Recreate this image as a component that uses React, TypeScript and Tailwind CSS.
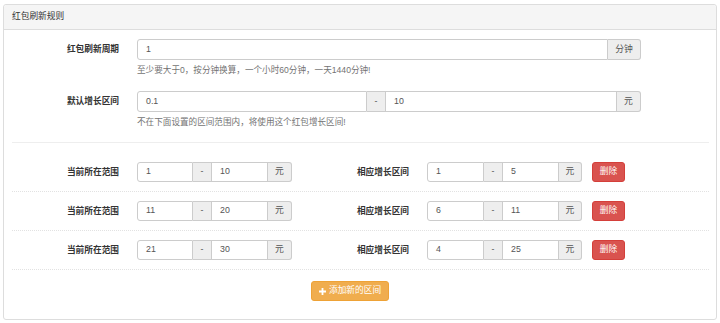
import React from "react";

const F = "font-['Liberation_Sans','Noto_Sans_CJK_SC',sans-serif]";

type Part = { t: "in" | "ad"; v: string; w: number };

function Group({ parts, h = 20 }: { parts: Part[]; h?: number }) {
  return (
    <div className="flex" style={{ height: h }}>
      {parts.map((p, i) => {
        const first = i === 0;
        const last = i === parts.length - 1;
        const base =
          p.t === "in"
            ? "bg-white text-[#555] justify-start pl-[8px]"
            : "bg-[#eeeeee] text-[#555] justify-center";
        const border = first ? "border" : "border-y border-r";
        const round = `${first ? "rounded-l-[3px]" : ""} ${last ? "rounded-r-[3px]" : ""}`;
        return (
          <div
            key={i}
            className={`flex items-center h-full border-[#cccccc] text-[8.8px] ${base} ${border} ${round}`}
            style={{ width: p.w }}
          >
            {p.v}
          </div>
        );
      })}
    </div>
  );
}

function Label({ text, h = 20 }: { text: string; h?: number }) {
  return (
    <div
      className="w-[107px] shrink-0 text-right font-bold text-[8.7px] text-[#333]"
      style={{ lineHeight: `${h}px` }}
    >
      {text}
    </div>
  );
}

const rows = [
  { a: "1", b: "10", c: "1", d: "5" },
  { a: "11", b: "20", c: "6", d: "11" },
  { a: "21", b: "30", c: "4", d: "25" },
];

export default function App() {
  return (
    <div className={`w-[720px] h-[323px] bg-white pt-[4px] pl-[3px] ${F}`}>
      <div className="w-[714px] border border-[#dddddd] rounded-[3px] bg-white">
        <div className="h-[25px] bg-[#f5f5f5] border-b border-[#dddddd] rounded-t-[3px] px-[8px] flex items-center text-[8.7px] text-[#333]">
          红包刷新规则
        </div>
        <div className="pl-[8px] pr-[7px] pt-[9px] pb-[18px]">
          <div className="flex">
            <Label text="红包刷新周期" h={21} />
            <div className="ml-[18px] w-[504px]">
              <Group
                h={21}
                parts={[
                  { t: "in", v: "1", w: 471 },
                  { t: "ad", v: "分钟", w: 33 },
                ]}
              />
              <div className="mt-[5px] text-[8.6px] leading-[11px] text-[#737373]">
                至少要大于0，按分钟换算，一个小时60分钟，一天1440分钟!
              </div>
            </div>
          </div>
          <div className="flex mt-[15px]">
            <Label text="默认增长区间" h={21} />
            <div className="ml-[18px] w-[504px]">
              <Group
                h={21}
                parts={[
                  { t: "in", v: "0.1", w: 230 },
                  { t: "ad", v: "-", w: 19 },
                  { t: "in", v: "10", w: 231 },
                  { t: "ad", v: "元", w: 24 },
                ]}
              />
              <div className="mt-[5px] text-[8.6px] leading-[11px] text-[#737373]">
                不在下面设置的区间范围内，将使用这个红包增长区间!
              </div>
            </div>
          </div>
          <div className="mt-[14px] border-t border-[#eeeeee]" />
          <div className="mt-[10px]">
            {rows.map((r, i) => (
              <div
                key={i}
                className="flex items-center pt-[9px] pb-[9px] border-b border-dotted border-[#e2e2e2]"
              >
                <Label text="当前所在范围" />
                <div className="ml-[18px]">
                  <Group
                    parts={[
                      { t: "in", v: r.a, w: 56 },
                      { t: "ad", v: "-", w: 19 },
                      { t: "in", v: r.b, w: 56 },
                      { t: "ad", v: "元", w: 24 },
                    ]}
                  />
                </div>
                <div className="ml-[10px]">
                  <Label text="相应增长区间" />
                </div>
                <div className="ml-[18px]">
                  <Group
                    parts={[
                      { t: "in", v: r.c, w: 57 },
                      { t: "ad", v: "-", w: 19 },
                      { t: "in", v: r.d, w: 56 },
                      { t: "ad", v: "元", w: 23 },
                    ]}
                  />
                </div>
                <button className="ml-[10px] w-[33px] h-[20px] rounded-[3px] bg-[#d9534f] border border-[#d43f3a] text-white text-[8.7px] flex items-center justify-center">
                  删除
                </button>
              </div>
            ))}
          </div>
          <div className="mt-[11px] ml-[299px]">
            <button className="w-[78px] h-[20px] rounded-[3px] bg-[#f0ad4e] border border-[#eea236] text-white text-[8.7px] flex items-center justify-center gap-[3px]">
              <svg width="7" height="7" viewBox="0 0 7 7">
                <path d="M2.6 0h1.8v2.6H7v1.8H4.4V7H2.6V4.4H0V2.6h2.6z" fill="white" />
              </svg>
              <span>添加新的区间</span>
            </button>
          </div>
        </div>
      </div>
    </div>
  );
}
